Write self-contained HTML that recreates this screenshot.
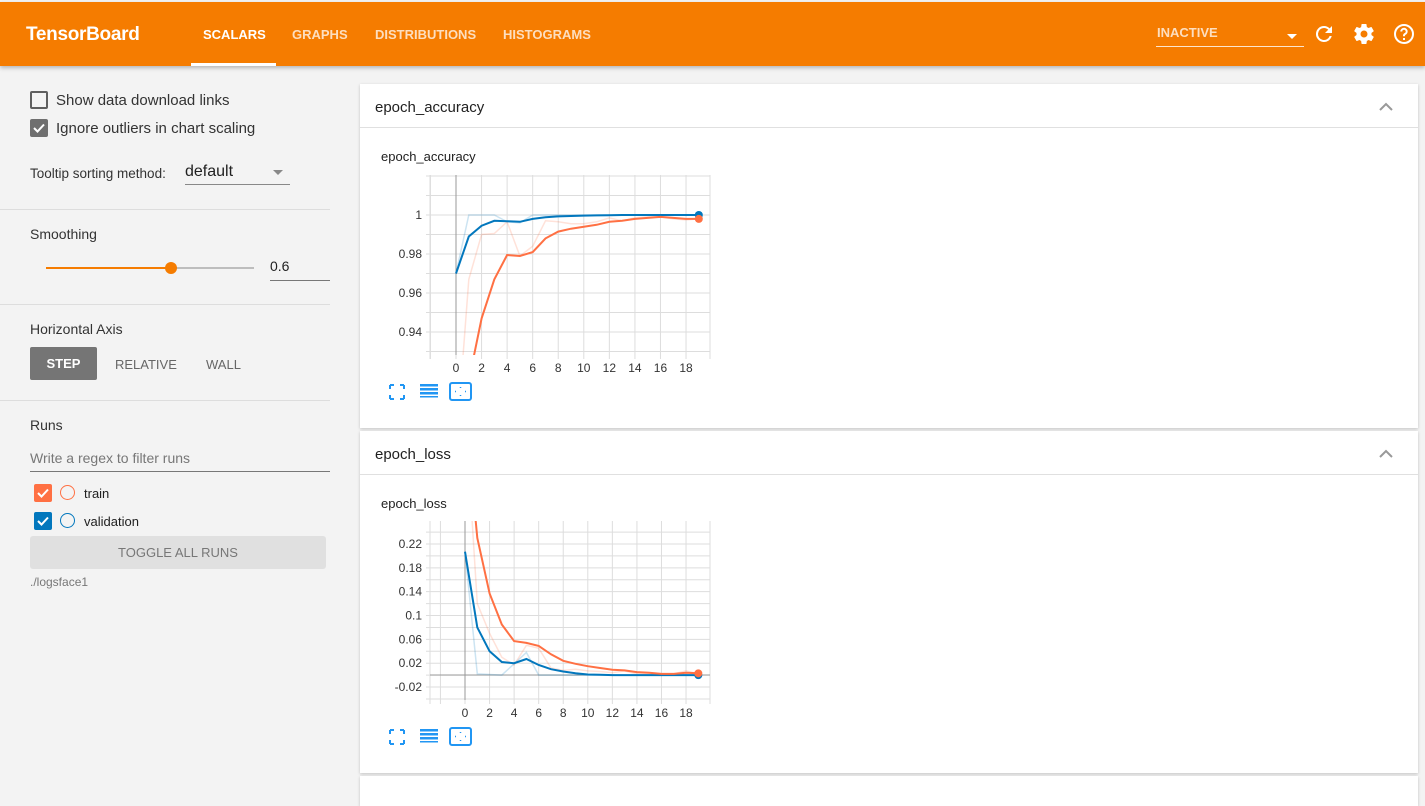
<!DOCTYPE html>
<html><head><meta charset="utf-8"><style>
*{box-sizing:border-box;margin:0;padding:0}
body{width:1425px;height:790px;overflow:hidden;background:#f3f3f3;font-family:"Liberation Sans",sans-serif;position:relative;color:#212121}
.a{position:absolute}
#hdr{left:0;top:2px;width:1425px;height:64px;background:#f57c00;box-shadow:0 2px 4px rgba(0,0,0,.25)}
.tab{position:absolute;top:25px;font-size:13px;font-weight:bold;color:rgba(255,255,255,.75)}
.sep{position:absolute;left:0;width:330px;height:1px;background:#ddd}
.lbl{font-size:14px;color:#333}
.card{position:absolute;left:360px;width:1058px;background:#fff;box-shadow:0 1px 3px rgba(0,0,0,.2)}
.card .h{height:44px;border-bottom:1px solid #e0e0e0;font-size:15px;padding:15px 0 0 15px}
.cb{position:absolute;width:18px;height:18px;border-radius:2px}
</style></head><body>
<div id="hdr" class="a">
<div class="a" style="left:26px;top:22px;font-size:19px;font-weight:bold;color:#fff;letter-spacing:-.3px">TensorBoard</div>
<div class="tab" style="left:203px;color:#fff">SCALARS</div>
<div class="a" style="left:191px;top:61px;width:85px;height:3px;background:#fff"></div>
<div class="tab" style="left:292px">GRAPHS</div>
<div class="tab" style="left:375px">DISTRIBUTIONS</div>
<div class="tab" style="left:503px">HISTOGRAMS</div>
<div class="tab" style="left:1157px;top:23px">INACTIVE</div>
<div class="a" style="left:1287px;top:32px;border:5px solid transparent;border-top:5px solid #fff"></div>
<div class="a" style="left:1156px;top:44px;width:148px;height:1px;background:rgba(255,255,255,.8)"></div>
<svg class="a" style="left:1312px;top:20px" width="24" height="24" viewBox="0 0 24 24"><path fill="#fff" d="M17.65 6.35A7.96 7.96 0 0 0 12 4a8 8 0 1 0 7.730 10h-2.08A6 6 0 1 1 12 6c1.66 0 3.14.69 4.22 1.78L13 11h7V4l-2.35 2.35z"/></svg>
<svg class="a" style="left:1352px;top:20px" width="24" height="24" viewBox="0 0 24 24"><path fill="#fff" d="M19.43 12.98c.04-.32.07-.64.07-.98s-.03-.66-.07-.98l2.110-1.65a.5.5 0 0 0 .12-.64l-2-3.46a.5.5 0 0 0-.61-.22l-2.49 1a7.3 7.3 0 0 0-1.69-.98l-.38-2.65A.49.49 0 0 0 14 2h-4a.49.49 0 0 0-.49.42l-.38 2.65c-.61.25-1.17.59-1.69.98l-2.49-1a.5.5 0 0 0-.61.22l-2 3.46a.49.49 0 0 0 .12.64l2.11 1.65c-.04.32-.07.65-.07.98s.03.66.07.98l-2.11 1.65a.5.5 0 0 0-.12.64l2 3.46c.12.22.39.3.61.22l2.49-1c.52.4 1.08.73 1.690.98l.38 2.65c.03.24.24.42.49.42h4c.25 0 .46-.18.49-.42l.38-2.65c.61-.25 1.17-.59 1.69-.98l2.49 1c.23.09.49 0 .61-.22l2-3.46a.5.5 0 0 0-.12-.64l-2.11-1.65zM12 15.5a3.5 3.5 0 1 1 0-7 3.5 3.5 0 0 1 0 7z"/></svg>
<svg class="a" style="left:1392px;top:20px" width="24" height="24" viewBox="0 0 24 24"><circle cx="12" cy="12" r="9" fill="none" stroke="#fff" stroke-width="2"/><path d="M9.3 9.5a2.7 2.7 0 1 1 3.9 2.4c-.8.4-1.2 1-1.2 1.9v.4" fill="none" stroke="#fff" stroke-width="2"/><rect x="11" y="16" width="2" height="2" fill="#fff"/></svg>
</div>

<div class="cb" style="left:30px;top:91px;border:2px solid #5f5f5f"></div>
<div class="a lbl" style="left:56px;top:92px;font-size:15px">Show data download links</div>
<div class="cb" style="left:30px;top:119px;background:#6f6f6f"><svg width="18" height="18"><path d="M4 9l3.5 3.5L14 5.5" stroke="#fff" stroke-width="2" fill="none"/></svg></div>
<div class="a lbl" style="left:56px;top:120px;font-size:15px">Ignore outliers in chart scaling</div>
<div class="a lbl" style="left:30px;top:166px;font-size:13.5px">Tooltip sorting method:</div>
<div class="a" style="left:185px;top:163px;font-size:16px">default</div>
<div class="a" style="left:273px;top:170px;border:5px solid transparent;border-top:5px solid #888"></div>
<div class="a" style="left:185px;top:184px;width:105px;height:1px;background:#888"></div>
<div class="sep" style="top:209px"></div>
<div class="a lbl" style="left:30px;top:226px">Smoothing</div>
<div class="a" style="left:46px;top:267px;width:125px;height:2px;background:#f57c00"></div>
<div class="a" style="left:171px;top:267px;width:83px;height:2px;background:#bdbdbd"></div>
<div class="a" style="left:165px;top:262px;width:12px;height:12px;border-radius:50%;background:#f57c00"></div>
<div class="a" style="left:270px;top:258px;font-size:14px">0.6</div>
<div class="a" style="left:270px;top:280px;width:60px;height:1px;background:#777"></div>
<div class="sep" style="top:304px"></div>
<div class="a lbl" style="left:30px;top:321px">Horizontal Axis</div>
<div class="a" style="left:30px;top:347px;width:67px;height:33px;background:#757575;border-radius:2px;color:#fff;font-size:13px;font-weight:bold;text-align:center;line-height:33px">STEP</div>
<div class="a" style="left:115px;top:357px;font-size:13px;color:#666">RELATIVE</div>
<div class="a" style="left:206px;top:357px;font-size:13px;color:#666">WALL</div>
<div class="sep" style="top:400px"></div>
<div class="a lbl" style="left:30px;top:417px">Runs</div>
<div class="a" style="left:30px;top:450px;font-size:14px;color:#777">Write a regex to filter runs</div>
<div class="a" style="left:30px;top:471px;width:300px;height:1px;background:#777"></div>
<div class="cb" style="left:34px;top:484px;background:#ff7043"><svg width="18" height="18"><path d="M4 9l3.5 3.5L14 5.5" stroke="#fff" stroke-width="2" fill="none"/></svg></div>
<div class="a" style="left:60px;top:485px;width:15px;height:15px;border-radius:50%;border:1.5px solid #ff7043"></div>
<div class="a" style="left:84px;top:486px;font-size:13px">train</div>
<div class="cb" style="left:34px;top:512px;background:#0277bd"><svg width="18" height="18"><path d="M4 9l3.5 3.5L14 5.5" stroke="#fff" stroke-width="2" fill="none"/></svg></div>
<div class="a" style="left:60px;top:513px;width:15px;height:15px;border-radius:50%;border:1.5px solid #0277bd"></div>
<div class="a" style="left:84px;top:514px;font-size:13px">validation</div>
<div class="a" style="left:30px;top:536px;width:296px;height:33px;background:#e0e0e0;border-radius:3px;text-align:center;line-height:33px;font-size:13px;color:#777">TOGGLE ALL RUNS</div>
<div class="a" style="left:30px;top:575px;font-size:12px;color:#777">./logsface1</div>

<div class="card" style="top:84px;height:344px"><div class="h">epoch_accuracy</div>
<svg class="a" style="left:0;top:0" width="1058" height="344" id="c1"></svg></div>
<div class="card" style="top:431px;height:342px"><div class="h">epoch_loss</div>
<svg class="a" style="left:0;top:0" width="1058" height="342" id="c2"></svg></div>
<div class="card" style="top:776px;height:30px"></div>

<script>
function draw(id,o){
 var s='';
 s+='<path d="M1020 26l6-6 6 6" fill="none" stroke="#999" stroke-width="2"/>';
 s+='<text x="21" y="'+(o.tt)+'" font-size="13" fill="#212121" font-family="Liberation Sans">'+o.title+'</text>';
 var L=70,R=350,T=o.T,B=o.B;
 for(var gx=o.x0-o.sx*2;gx<=R;gx+=o.sx*2){if(gx>=L) s+='<line x1="'+gx+'" y1="'+T+'" x2="'+gx+'" y2="'+(B+4)+'" stroke="#ddd"/>';}
 s+='<line x1="'+L+'" y1="'+T+'" x2="'+L+'" y2="'+(B+4)+'" stroke="#ddd"/><line x1="'+R+'" y1="'+T+'" x2="'+R+'" y2="'+(B+4)+'" stroke="#ddd"/>';
 for(var gy=o.gy0;gy<=B;gy+=o.gs/2){ if(gy>=T) s+='<line x1="'+(L-4)+'" y1="'+gy+'" x2="'+R+'" y2="'+gy+'" stroke="#ddd"/>';}
 for(var gy=o.gy0-o.gs/2;gy>=T;gy-=o.gs/2) s+='<line x1="'+(L-4)+'" y1="'+gy+'" x2="'+R+'" y2="'+gy+'" stroke="#ddd"/>';
 s+='<line x1="'+o.x0+'" y1="'+T+'" x2="'+o.x0+'" y2="'+B+'" stroke="#999"/>';
 if(o.zy) s+='<line x1="'+L+'" y1="'+o.zy+'" x2="'+R+'" y2="'+o.zy+'" stroke="#999"/>';
 o.yl.forEach(function(l){s+='<text x="'+(L-8)+'" y="'+(o.y(l)+4)+'" text-anchor="end" font-size="12" fill="#333" font-family="Liberation Sans">'+l+'</text>'});
 for(var i=0;i<=18;i+=2)s+='<text x="'+(o.x0+i*o.sx)+'" y="'+(B+17)+'" text-anchor="middle" font-size="12" fill="#333" font-family="Liberation Sans">'+i+'</text>';
 s+='<clipPath id="k'+id+'"><rect x="'+L+'" y="'+T+'" width="'+(R-L)+'" height="'+(B-T)+'"/></clipPath><g clip-path="url(#k'+id+')">';
 function p(d,c,w,op){var q=d.map(function(v,i){return (o.x0+i*o.sx).toFixed(1)+','+o.y(v).toFixed(1)}).join(' ');s+='<polyline points="'+q+'" fill="none" stroke="'+c+'" stroke-width="'+w+'" opacity="'+op+'"/>';}
 p(o.rb,'#0277bd',1.5,.2);p(o.ro,'#ff7043',1.5,.2);p(o.b,'#0277bd',2,1);p(o.o,'#ff7043',2,1);
 s+='</g>';
 s+='<circle cx="'+(o.x0+19*o.sx)+'" cy="'+o.y(o.b[19])+'" r="4" fill="#0277bd"/><circle cx="'+(o.x0+19*o.sx)+'" cy="'+o.y(o.o[19])+'" r="4" fill="#ff7043"/>';
 var iy=B+30;
 s+='<path d="M30 '+iy+'h4M30 '+iy+'v4M44 '+iy+'h-4M44 '+iy+'v4M30 '+(iy+14)+'h4M30 '+(iy+14)+'v-4M44 '+(iy+14)+'h-4M44 '+(iy+14)+'v-4" stroke="#2196f3" stroke-width="2" fill="none"/>';
 for(var k=0;k<4;k++) s+='<rect x="60" y="'+(iy+k*4-1)+'" width="18" height="'+(k==3?1.5:2.5)+'" fill="#2196f3"/>';
 s+='<rect x="90" y="'+(iy-2)+'" width="21" height="17" rx="2" fill="none" stroke="#2196f3" stroke-width="2"/><path d="M100.5 '+(iy+2)+'v1M100.5 '+(iy+10)+'v1M95 '+(iy+6.5)+'h1M105 '+(iy+6.5)+'h1" stroke="#2196f3" stroke-width="1.5"/>';
 document.getElementById(id).innerHTML=s;
}
draw('c1',{title:'epoch_accuracy',tt:77,T:91,B:271,x0:96,sx:12.78,gy0:131,gs:39,
 y:function(v){return 131+(1-v)*1950},yl:['1','0.98','0.96','0.94'],
 b:[.970,.989,.9945,.997,.9968,.9965,.998,.9988,.9993,.9995,.9997,.9998,.9999,1,1,1,1,1,1,1],
 o:[.88,.915,.947,.967,.9795,.979,.981,.988,.9915,.993,.994,.995,.9965,.997,.998,.9985,.999,.9985,.998,.998],
 rb:[.970,1,1,1,.9965,.996,1,1,1,1,1,1,1,1,1,1,1,1,1,1],
 ro:[.88,.967,.99,.9905,.9965,.979,.984,.997,.9965,.9955,.9955,.9965,.9985,.997,.9985,.999,.999,.998,.9975,.998]});
draw('c2',{title:'epoch_loss',tt:77,T:90,B:269,x0:105,sx:12.28,gy0:113,gs:23.84,zy:244,
 y:function(v){return 113+(0.22-v)*596},yl:['0.22','0.18','0.14','0.1','0.06','0.02','-0.02'],
 b:[.207,.08,.04,.022,.02,.027,.017,.01,.006,.003,.001,.0005,0,0,0,0,0,0,0,0],
 o:[.45,.23,.137,.085,.057,.054,.049,.035,.024,.019,.015,.012,.009,.008,.005,.004,.002,.002,.004,.003],
 rb:[.207,.002,.001,0,.019,.038,0,0,0,0,0,0,0,0,0,0,0,0,0,0],
 ro:[.45,.12,.07,.03,.017,.05,.045,.012,.008,.01,.007,.006,.004,.007,.002,.002,0,.002,.007,.002]});
</script>
</body></html>
